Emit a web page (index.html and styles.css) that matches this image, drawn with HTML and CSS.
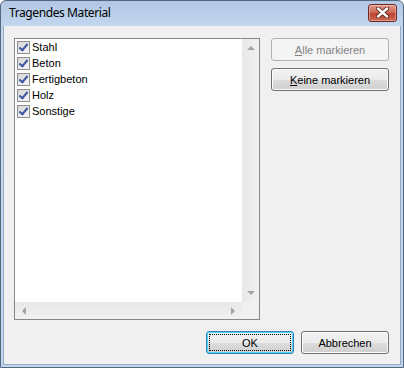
FILE: index.html
```html
<!DOCTYPE html>
<html lang="de">
<head>
    <meta charset="UTF-8">
    <title>Tragendes Material</title>
    <link rel="stylesheet" href="styles.css">
</head>
<body>
    <div class="window">
        <!-- Titelleiste -->
        <div class="titlebar">
            <span class="title">Tragendes Material</span>
            <button class="close-btn" title="Schließen">
                <svg width="13" height="11" viewBox="0 0 13 11">
                    <path d="M2 1.5 L11 9.5 M11 1.5 L2 9.5" stroke="#5a1f17" stroke-width="4.2" stroke-linecap="round"/>
                    <path d="M2 1.5 L11 9.5 M11 1.5 L2 9.5" stroke="#ffffff" stroke-width="2.4" stroke-linecap="round"/>
                </svg>
            </button>
        </div>

        <div class="client">
            <div class="top-row">
                <!-- Liste mit Checkboxen -->
                <div class="listbox">
                    <div class="list-main">
                        <ul class="items">
                            <li><span class="check"></span>Stahl</li>
                            <li><span class="check"></span>Beton</li>
                            <li><span class="check"></span>Fertigbeton</li>
                            <li><span class="check"></span>Holz</li>
                            <li><span class="check"></span>Sonstige</li>
                        </ul>
                        <div class="vscroll">
                            <span class="arrow arrow-up"></span>
                            <span class="arrow arrow-down"></span>
                        </div>
                    </div>
                    <div class="list-foot">
                        <div class="hscroll">
                            <span class="arrow arrow-left"></span>
                            <span class="arrow arrow-right"></span>
                        </div>
                        <div class="corner"></div>
                    </div>
                </div>

                <div class="side-buttons">
                    <button class="btn" disabled><u>A</u>lle markieren</button>
                    <button class="btn"><u>K</u>eine markieren</button>
                </div>
            </div>

            <div class="bottom-row">
                <button class="btn btn-dialog btn-default">OK</button>
                <button class="btn btn-dialog">Abbrechen</button>
            </div>
        </div>
    </div>
</body>
</html>
```

FILE: styles.css
```css
/* Grundlayout */
body {
    margin: 0;
    background: #ffffff;
    font-family: 'Liberation Sans', Arial, sans-serif;
    font-size: 11px;
}

/* Fensterrahmen */
.window {
    width: 404px;
    height: 368px;
    box-sizing: border-box;
    border: 1px solid #55677f;
    border-radius: 6px 6px 0 0;
    background: linear-gradient(#b2c8e5, #c5d8ef 30px, #c0d5ee);
    padding: 0 2px 2px;
    display: flex;
    flex-direction: column;
}

.titlebar {
    height: 25px;
    display: flex;
    align-items: center;
    padding: 0 4px 0 6px;
}

.title {
    font-family: 'Noto Sans', 'Open Sans', sans-serif;
    font-size: 12px;
    letter-spacing: -0.4px;
    color: #000;
    padding-bottom: 2px;
}

.close-btn {
    margin-left: auto;
    width: 29px;
    height: 18px;
    margin-top: -2px;
    padding: 0;
    border: 1px solid #6e2a22;
    border-radius: 3px;
    background: linear-gradient(#e09a88, #cc6c58 45%, #bb4230 55%, #cc6a55);
    box-shadow: inset 0 0 0 1px rgba(255,255,255,0.35);
    display: flex;
    align-items: center;
    justify-content: center;
}

/* Client-Bereich */
.client {
    flex: 1;
    background: #f0f0f0;
    border: 1px solid #93abc9;
    border-top: none;
    padding: 12px 11px 10px 10px;
    display: flex;
    flex-direction: column;
}

.top-row {
    display: flex;
    gap: 11px;
    height: 282px;
}

/* Listenfeld */
.listbox {
    width: 246px;
    box-sizing: border-box;
    border: 1px solid #828790;
    background: #ffffff;
    display: flex;
    flex-direction: column;
}

.list-main {
    flex: 1;
    display: flex;
}

.items {
    flex: 1;
    list-style: none;
    margin: 0;
    padding: 0 0 0 2px;
}

.items li {
    height: 16px;
    display: flex;
    align-items: center;
    gap: 2px;
    color: #000;
}

.check {
    width: 11px;
    height: 11px;
    border: 1px solid #8f8f8f;
    background: linear-gradient(135deg, #d6d6d6, #f6f6f6);
    position: relative;
}

.check::after {
    content: '';
    position: absolute;
    left: 3px;
    top: 0px;
    width: 3px;
    height: 7px;
    border: solid #3b56a0;
    border-width: 0 2px 2px 0;
    transform: rotate(40deg);
}

/* Bildlaufleisten */
.vscroll {
    width: 17px;
    background: linear-gradient(to right, #e8e8e8, #f1f1f1);
    display: flex;
    flex-direction: column;
    justify-content: space-between;
    align-items: center;
    padding: 7px 0;
}

.list-foot {
    height: 17px;
    display: flex;
}

.hscroll {
    flex: 1;
    background: linear-gradient(#e8e8e8, #f1f1f1);
    display: flex;
    justify-content: space-between;
    align-items: center;
    padding: 0 7px;
}

.corner {
    width: 17px;
    background: #f0f0f0;
}

.arrow {
    width: 0;
    height: 0;
    border: 4px solid transparent;
}

.arrow-up {
    border-top: none;
    border-bottom: 4px solid #a3a3a3;
}

.arrow-down {
    border-bottom: none;
    border-top: 4px solid #a3a3a3;
}

.arrow-left {
    border-left: none;
    border-right: 4px solid #a3a3a3;
}

.arrow-right {
    border-right: none;
    border-left: 4px solid #a3a3a3;
}

/* Schaltflächen */
.side-buttons {
    display: flex;
    flex-direction: column;
    gap: 7px;
}

.btn {
    width: 118px;
    height: 23px;
    padding: 0;
    border: 1px solid #707070;
    border-radius: 3px;
    background: linear-gradient(#f2f2f2, #ebebeb 50%, #dddddd 50%, #cfcfcf);
    box-shadow: inset 0 0 0 1px #fbfbfb;
    font-family: 'Liberation Sans', Arial, sans-serif;
    font-size: 11px;
    color: #000;
}

.btn:disabled {
    border-color: #adb2b5;
    background: #f4f4f4;
    box-shadow: none;
    color: #838383;
}

.bottom-row {
    margin-top: auto;
    display: flex;
    justify-content: flex-end;
    gap: 7px;
}

.btn-dialog {
    width: 88px;
}

.btn-default {
    border-color: #3c7fb1;
    box-shadow: inset 0 0 0 1px #48d8fb;
    outline: 1px dotted #000;
    outline-offset: -4px;
}
```
